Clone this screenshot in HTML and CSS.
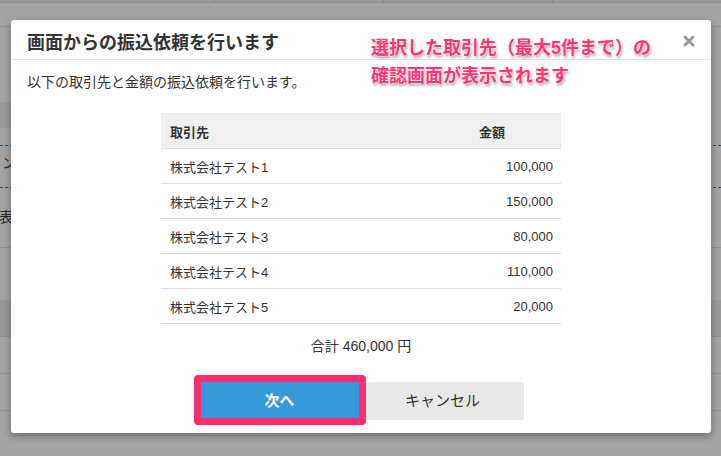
FILE: index.html
```html
<!DOCTYPE html>
<html lang="ja">
<head>
  <meta charset="UTF-8">
  <title>振込依頼</title>
  <link rel="stylesheet" href="styles.css">
</head>
<body>
  <!-- 背景の画面（オーバーレイで暗くなっている） -->
  <div class="page">
    <div class="tabs">
      <span></span><span></span><span></span><span></span>
    </div>
    <div class="toolbar"></div>
    <div class="search"><span class="search-box"></span></div>
    <div class="dash"></div>
    <div class="page-text">ン</div>
    <div class="dash second"></div>
    <div class="page-text shift">表</div>
    <div class="rows">
      <div class="row"></div>
      <div class="row dark"></div>
      <div class="row"></div>
      <div class="row"></div>
      <div class="row"></div>
    </div>
  </div>

  <!-- モーダル -->
  <div class="modal">
    <div class="modal-header">
      <h1 class="modal-title">画面からの振込依頼を行います</h1>
      <a href="#" class="close">
        <svg width="12" height="12" viewBox="0 0 12 12">
          <path d="M2 2 L10 10 M10 2 L2 10" stroke="#9a9a9a" stroke-width="3" stroke-linecap="round"/>
        </svg>
      </a>
    </div>
    <div class="modal-body">
      <p class="lead">以下の取引先と金額の振込依頼を行います。</p>
      <table class="list">
        <thead>
          <tr><th>取引先</th><th class="amount-head">金額</th></tr>
        </thead>
        <tbody>
          <tr><td>株式会社テスト1</td><td class="amount">100,000</td></tr>
          <tr><td>株式会社テスト2</td><td class="amount">150,000</td></tr>
          <tr><td>株式会社テスト3</td><td class="amount">80,000</td></tr>
          <tr><td>株式会社テスト4</td><td class="amount">110,000</td></tr>
          <tr><td>株式会社テスト5</td><td class="amount">20,000</td></tr>
        </tbody>
      </table>
      <p class="total">合計 460,000 円</p>
      <div class="buttons">
        <span class="mark"><a href="#" class="btn btn-next">次へ</a></span>
        <a href="#" class="btn btn-cancel">キャンセル</a>
      </div>
    </div>

    <!-- 注釈 -->
    <p class="note">選択した取引先（最大5件まで）の<br>確認画面が表示されます</p>
  </div>
</body>
</html>
```

FILE: styles.css
```css
body {
  margin: 0;
  font-family: "Liberation Sans", "Noto Sans CJK JP", sans-serif;
  color: #333;
}
a {
  text-decoration: none;
}
.page {
  height: 456px;
  overflow: hidden;
  background: #a4a4a4;
}
.tabs {
  display: flex;
  height: 2px;
  padding-left: 45px;
  border-bottom: 1px solid #8e8e8e;
  background: #9a9a9a;
}
.tabs span {
  width: 182px;
  border-left: 1px solid #8a8a8a;
}
.toolbar {
  height: 23px;
  border-bottom: 1px solid #959595;
}
.search {
  height: 101px;
  padding-top: 75px;
  box-sizing: border-box;
}
.search-box {
  display: block;
  width: 200px;
  height: 26px;
  background: #9b9b9b;
}
.dash {
  margin-top: 17px;
  height: 0;
  border-top: 1px dashed #2f4b80;
}
.dash.second {
  margin-top: 12px;
}
.page-text {
  height: 24px;
  margin-top: 5px;
  padding-left: 2px;
  line-height: 24px;
  font-size: 14px;
  color: #2a2a2a;
}
.page-text.shift {
  margin-left: -3px;
  margin-top: 17px;
}
.rows {
  margin-top: 18px;
}
.row {
  height: 36px;
  border-top: 1px solid #949494;
}
.row:first-child {
  height: 52px;
}
.row.dark {
  height: 35px;
  background: #999;
  border-top: 1px solid #999;
}

/* モーダル */
.modal {
  position: absolute;
  left: 11px;
  top: 20px;
  width: 700px;
  height: 413px;
  background: #fff;
  border-radius: 3px;
  box-shadow: 0 3px 9px rgba(0, 0, 0, 0.35);
}
.modal-header {
  display: flex;
  align-items: center;
  justify-content: space-between;
  height: 40px;
  padding: 2px 16px 0;
  box-sizing: border-box;
  border-bottom: 1px solid #e5e5e5;
}
.modal-title {
  margin: 0;
  font-size: 18px;
  font-weight: bold;
  color: #333;
}
.close {
  display: block;
  width: 12px;
  height: 12px;
}
.close svg {
  display: block;
}
.modal-body {
  padding: 13px 16px 0;
}
.lead {
  margin: 0;
  font-size: 14px;
  line-height: 18px;
}
.list {
  width: 400px;
  margin: 22px auto 0;
  border-collapse: collapse;
  font-size: 13px;
}
.list th,
.list td {
  height: 34px;
  padding: 0 8px 0 9px;
  border-bottom: 1px solid #ddd;
  text-align: left;
}
.list th {
  background: #f0f0f0;
  border-top: 1px solid #e6e6e6;
}
.amount-head {
  width: 74px;
}
.list td.amount {
  text-align: right;
}
.total {
  margin: 13px 0 0;
  text-align: center;
  font-size: 14px;
  line-height: 18px;
}
.buttons {
  display: flex;
  justify-content: center;
  margin-top: 27px;
}
.btn {
  display: block;
  width: 163px;
  height: 38px;
  line-height: 38px;
  text-align: center;
  font-size: 15px;
}
.btn-next {
  background: #3498db;
  color: #fff;
  font-weight: bold;
}
.btn-cancel {
  background: #e8e8e8;
  color: #333;
  border-radius: 0 3px 3px 0;
}
.mark {
  position: relative;
}
.mark::after {
  content: "";
  position: absolute;
  top: -7px;
  left: -4px;
  right: -5px;
  bottom: -5px;
  border: 7px solid #ff2f6f;
  border-radius: 4px;
}
.note {
  position: absolute;
  left: 360px;
  top: 14px;
  margin: 0;
  font-size: 18px;
  font-weight: bold;
  line-height: 28px;
  color: #ff3572;
  text-shadow: 0 0 2px #fff, 0 0 2px #fff, 1px 2px 3px rgba(0, 0, 0, 0.45);
}
```
